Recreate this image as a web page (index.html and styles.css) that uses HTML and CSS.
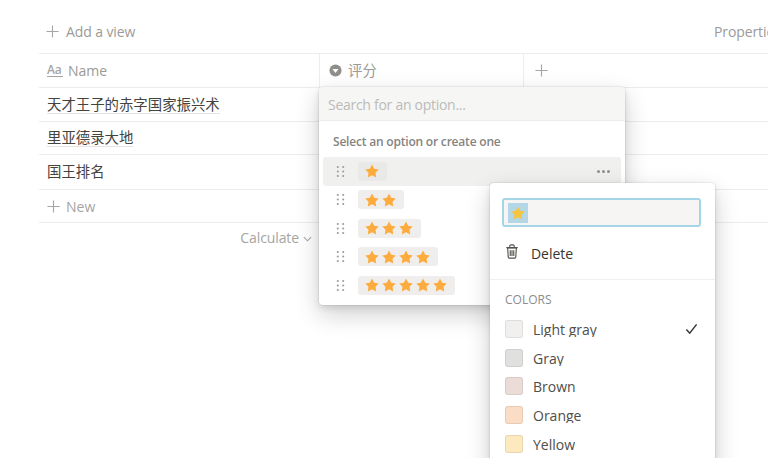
FILE: index.html
```html
<!DOCTYPE html>
<html lang="en">
<head>
<meta charset="utf-8">
<title>Table</title>
<link rel="stylesheet" href="styles.css">
</head>
<body>
<svg class="defs" width="0" height="0" aria-hidden="true">
  <defs>
    <symbol id="star" viewBox="0 0 16 16"><path d="M8 .6l2.5 4.8 5.1.8-3.6 3.8.8 5.3L8 12.9l-4.8 2.4.8-5.3L.4 6.2l5.1-.8z"/></symbol>
    <symbol id="grip" viewBox="0 0 10 14"><g><circle cx="2" cy="2" r="1.2"/><circle cx="8" cy="2" r="1.2"/><circle cx="2" cy="7" r="1.2"/><circle cx="8" cy="7" r="1.2"/><circle cx="2" cy="12" r="1.2"/><circle cx="8" cy="12" r="1.2"/></g></symbol>
    <symbol id="plus" viewBox="0 0 14 14"><path d="M7 .5v13M.5 7h13" fill="none" stroke="currentColor" stroke-width="1.2"/></symbol>
  </defs>
</svg>

<main class="page">
  <div class="toolbar">
    <div class="add-view"><svg class="plus"><use href="#plus"/></svg><span>Add a view</span></div>
    <div class="properties">Properties</div>
  </div>

  <div class="row head">
    <div class="cell name"><span class="aa">Aa</span><span>Name</span></div>
    <div class="cell rating">
      <svg class="sel-icon" viewBox="0 0 14 14"><circle cx="7" cy="7" r="6.5"/><path d="M3.8 5.4h6.4L7 9.6z" fill="#fff"/></svg>
      <span class="cjk">评分</span>
    </div>
    <div class="cell add"><svg class="plus"><use href="#plus"/></svg></div>
  </div>
  <div class="row r1"><div class="cell name title cjk"><u>天才王子的赤字国家振兴术</u></div></div>
  <div class="row r2"><div class="cell name title cjk"><u>里亚德录大地</u></div></div>
  <div class="row r3"><div class="cell name title cjk"><span>国王排名</span></div></div>
  <div class="row r4"><div class="cell name new"><svg class="plus"><use href="#plus"/></svg><span>New</span></div></div>
  <div class="calc-row">
    <span>Calculate</span>
    <svg class="chev" viewBox="0 0 10 6"><path d="M1 1l4 4 4-4" fill="none" stroke="currentColor" stroke-width="1.2"/></svg>
  </div>
</main>

<section class="menu options">
  <div class="search">Search for an option...</div>
  <div class="hint">Select an option or create one</div>
  <ul class="opt-list">
    <li class="opt hover">
      <svg class="grip"><use href="#grip"/></svg>
      <span class="pill"><svg class="star"><use href="#star"/></svg></span>
      <span class="more"><i></i><i></i><i></i></span>
    </li>
    <li class="opt">
      <svg class="grip"><use href="#grip"/></svg>
      <span class="pill"><svg class="star"><use href="#star"/></svg><svg class="star"><use href="#star"/></svg></span>
    </li>
    <li class="opt">
      <svg class="grip"><use href="#grip"/></svg>
      <span class="pill"><svg class="star"><use href="#star"/></svg><svg class="star"><use href="#star"/></svg><svg class="star"><use href="#star"/></svg></span>
    </li>
    <li class="opt">
      <svg class="grip"><use href="#grip"/></svg>
      <span class="pill"><svg class="star"><use href="#star"/></svg><svg class="star"><use href="#star"/></svg><svg class="star"><use href="#star"/></svg><svg class="star"><use href="#star"/></svg></span>
    </li>
    <li class="opt">
      <svg class="grip"><use href="#grip"/></svg>
      <span class="pill"><svg class="star"><use href="#star"/></svg><svg class="star"><use href="#star"/></svg><svg class="star"><use href="#star"/></svg><svg class="star"><use href="#star"/></svg><svg class="star"><use href="#star"/></svg></span>
    </li>
  </ul>
</section>

<section class="menu edit">
  <div class="edit-top">
    <div class="field"><span class="selected"><svg class="star yellow"><use href="#star"/></svg></span></div>
    <div class="delete">
      <svg class="trash" viewBox="0 0 16 18" fill="none" stroke="currentColor" stroke-width="1.3">
        <path d="M1.5 4.5h13M5.5 4.2V2.6c0-.7.5-1.1 1.1-1.1h2.8c.6 0 1.1.4 1.1 1.1v1.6"/>
        <path d="M3 4.8l.7 10.6c0 .7.5 1.1 1.1 1.1h6.4c.6 0 1.1-.4 1.1-1.1L13 4.8z"/>
        <path d="M6 7.5v6.5M8 7.5v6.5M10 7.5v6.5"/>
      </svg>
      <span>Delete</span>
    </div>
  </div>
  <div class="colors">
    <div class="colors-title">COLORS</div>
    <div class="color"><span class="swatch lightgray"></span><span class="clabel">Light gray</span>
      <svg class="check" viewBox="0 0 14 12"><path d="M1.5 6.5l3.6 4L12.5 1" fill="none" stroke="currentColor" stroke-width="1.6"/></svg>
    </div>
    <div class="color"><span class="swatch gray"></span><span class="clabel">Gray</span></div>
    <div class="color"><span class="swatch brown"></span><span class="clabel">Brown</span></div>
    <div class="color"><span class="swatch orange"></span><span class="clabel">Orange</span></div>
    <div class="color"><span class="swatch yellowc"></span><span class="clabel">Yellow</span></div>
  </div>
</section>
</body>
</html>
```
FILE: styles.css
```css
* { box-sizing: border-box; }
html, body { margin: 0; height: 100%; }
body {
  position: relative;
  width: 768px;
  height: 458px;
  overflow: hidden;
  background: #fff;
  color: #37352f;
  font-family: "Open Sans", "Noto Sans", "Noto Sans CJK SC", sans-serif;
  font-size: 14px;
}
.defs { position: absolute; }
.cjk { font-family: "Noto Sans CJK SC", sans-serif; font-size: 14.4px; }

.page { padding-left: 39px; }

.toolbar {
  height: 54px;
  padding: 9px 0 0 7px;
  display: flex;
  align-items: center;
  justify-content: space-between;
  border-bottom: 1px solid #ededeb;
  color: #9b9a97;
  white-space: nowrap;
}
.add-view { display: flex; align-items: center; gap: 7px; letter-spacing: -0.1px; }
.properties { margin-right: -28px; width: 82px; flex: none; letter-spacing: -0.1px; }

.plus { width: 13px; height: 13px; flex: none; color: #a6a5a2; }

.row {
  display: flex;
  border-bottom: 1px solid #ededeb;
  white-space: nowrap;
}
.head { height: 34px; color: #9b9a97; }
.r1 { height: 34px; }
.r2 { height: 33px; }
.r3 { height: 35px; }
.r4 { height: 33px; }

.cell { display: flex; align-items: center; }
.name { width: 281px; padding-left: 8px; flex: none; }
.head .name { border-right: 1px solid #ededeb; gap: 5px; }
.rating { width: 204px; flex: none; padding-left: 9px; gap: 6px; border-right: 1px solid #ededeb; }
.rating .cjk { margin-top: -2px; }
.add { padding-left: 11px; }

.aa {
  font-size: 12px;
  font-weight: 600;
  line-height: 11px;
  color: #a6a5a2;
  border-bottom: 1px solid #a6a5a2;
  width: 16px;
  padding-bottom: 1px;
  letter-spacing: -0.2px;
}
.sel-icon { width: 13px; height: 13px; fill: #8f8e8b; flex: none; }

.title { color: #45433e; padding-bottom: 3px; }
.title u { text-decoration-color: #e4e3e1; text-underline-offset: 3px; }

.new { color: #a6a5a2; gap: 6px; }

.calc-row {
  width: 273px;
  height: 29px;
  display: flex;
  justify-content: flex-end;
  align-items: center;
  gap: 4px;
  color: #a6a5a2;
  letter-spacing: -0.1px;
}
.chev { width: 9px; height: 6px; margin-top: 2px; }

/* floating menus */
.menu {
  position: absolute;
  background: #fff;
  border-radius: 4px;
  box-shadow: 0 0 0 1px rgba(15,15,15,.05), 0 3px 6px rgba(15,15,15,.1), 0 9px 24px rgba(15,15,15,.2);
}
.options {
  left: 319px;
  top: 87px;
  width: 306px;
  height: 218px;
}
.search {
  height: 34px;
  padding: 2px 0 0 9px;
  display: flex;
  align-items: center;
  background: #f6f6f4;
  border-bottom: 1px solid #ededeb;
  border-radius: 4px 4px 0 0;
  color: #bcbbb8;
  letter-spacing: -0.28px;
}
.hint {
  height: 36px;
  padding: 12px 0 0 14px;
  font-size: 12px;
  font-weight: 600;
  line-height: 17px;
  color: #85847f;
  letter-spacing: -0.2px;
}
.opt-list {
  margin: 0;
  padding: 0 4px;
  list-style: none;
}
.opt {
  height: 28.5px;
  display: flex;
  align-items: center;
  padding-left: 13px;
  border-radius: 3px;
}
.opt.hover { background: #f0f0ef; }
.opt.hover .pill { background: #e9e9e7; }
.grip { width: 9px; height: 13px; fill: #9e9d9a; flex: none; }
.pill {
  margin-left: 13px;
  height: 19px;
  display: inline-flex;
  align-items: center;
  gap: 3px;
  padding: 0 8px 0 7px;
  background: #efeeec;
  border-radius: 3px;
}
.star { width: 14px; height: 14px; fill: #fdab3d; flex: none; }
.more { margin-left: auto; margin-right: 11px; display: flex; gap: 2px; }
.more i { width: 3px; height: 3px; border-radius: 50%; background: #908f8c; }

.edit {
  left: 490px;
  top: 183px;
  width: 225px;
  height: 290px;
}
.edit-top {
  height: 97px;
  padding: 15px 14px 0 12px;
  border-bottom: 1px solid #f0efed;
}
.field {
  height: 29px;
  padding: 3px 4px;
  display: flex;
  align-items: center;
  background: #f6f5f3;
  border: 2px solid #a5d6e8;
  border-radius: 3px;
}
.selected {
  width: 20px;
  height: 20px;
  display: flex;
  align-items: center;
  justify-content: center;
  background: #b4d7e8;
}
.star.yellow { fill: #f7c53b; }
.delete {
  height: 29px;
  margin-top: 11px;
  display: flex;
  align-items: center;
  gap: 12px;
  padding-left: 3px;
}
.trash { width: 14px; height: 17px; color: #55534e; flex: none; margin-top: -2px; }
.delete span { padding-top: 1px; letter-spacing: -0.05px; }

.colors { padding: 12px 14px 0 15px; }
.colors-title {
  height: 16px;
  font-size: 12px;
  line-height: 16px;
  color: #8d8c88;
}
.color {
  height: 28.6px;
  display: flex;
  align-items: center;
}
.colors-title + .color { margin-top: 7px; }
.swatch {
  width: 18px;
  height: 18px;
  border-radius: 3px;
  border: 1px solid rgba(15,15,15,.08);
  flex: none;
}
.lightgray { background: #f1f0ee; }
.gray { background: #e0e0de; }
.brown { background: #ebdcd8; }
.orange { background: #fbdcc4; }
.yellowc { background: #fce9be; }
.clabel {
  margin: 0 0 0 10px;
  height: 16px;
  line-height: 18px;
  overflow: hidden;
  color: #4f4e49;
}
.check { width: 13px; height: 12px; margin-left: auto; margin-right: 3px; color: #37352f; }
```
